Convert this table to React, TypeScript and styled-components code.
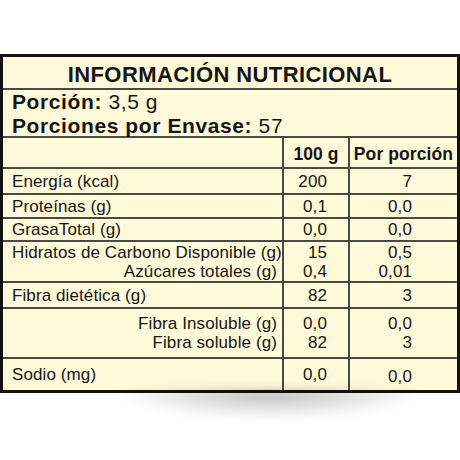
import React from 'react';
import styled, { createGlobalStyle } from 'styled-components';

const GlobalStyle = createGlobalStyle`
  html, body {
    margin: 0;
    padding: 0;
    background: #ffffff;
  }
  body {
    font-family: "Liberation Sans", Arial, sans-serif;
    color: #161616;
  }
`;

const LINE = '#4a4a44';

const Page = styled.div`
  width: 460px;
  height: 460px;
  padding-top: 54px;
  box-sizing: border-box;
  position: relative;
  overflow: hidden;
`;

const Panel = styled.div`
  position: relative;
  z-index: 0;
  width: 460px;
  box-sizing: border-box;
  border: 3px solid #111;
  background: #fdf9d9;

  &::after {
    content: '';
    position: absolute;
    left: 110px;
    right: 30px;
    bottom: -30px;
    height: 30px;
    background: radial-gradient(ellipse at 50% 0%, rgba(0, 0, 0, 0.28), rgba(0, 0, 0, 0) 70%);
    filter: blur(4px);
    z-index: -1;
  }
`;

const Title = styled.div`
  height: 31px;
  padding-top: 5px;
  box-sizing: border-box;
  text-align: center;
  font-size: 22px;
  line-height: 26px;
  letter-spacing: 0.4px;
  font-weight: bold;
`;

const Serving = styled.div`
  height: 48px;
  box-sizing: border-box;
  border-top: 2px solid ${LINE};
  padding: 0 0 0 9px;
  font-size: 21px;
  line-height: 23.5px;
  letter-spacing: 0.6px;

  b {
    font-weight: bold;
  }
`;

const Row = styled.div<{ $h: number }>`
  display: grid;
  grid-template-columns: 279px 66px 109px;
  height: ${(p) => p.$h}px;
  box-sizing: border-box;
  border-top: 2px solid ${LINE};
`;

const Cell = styled.div<{ $col: 1 | 2 | 3; $head?: boolean; $dy?: number }>`
  display: flex;
  flex-direction: column;
  justify-content: center;
  align-items: ${(p) => (p.$head ? 'center' : p.$col === 1 ? 'stretch' : 'flex-end')};
  border-left: ${(p) => (p.$col === 1 ? 'none' : `2px solid ${LINE}`)};
  padding-left: ${(p) => (p.$col === 1 ? '9px' : '0')};
  padding-right: ${(p) => (p.$head ? '0' : p.$col === 1 ? '5px' : p.$col === 2 ? '21px' : '45px')};
  padding-top: ${(p) => (p.$dy ?? 0)}px;
  font-size: ${(p) => (p.$head ? '17.5px' : '17px')};
  font-weight: ${(p) => (p.$head ? 'bold' : 'normal')};
  line-height: 19px;
  letter-spacing: 0.1px;
  white-space: nowrap;
`;

const Line = styled.span<{ $right?: boolean }>`
  display: block;
  text-align: ${(p) => (p.$right ? 'right' : 'left')};
`;

type Item = { text: string; sub?: boolean };
type Entry = { h: number; items: Item[]; a: string[]; b: string[]; dy?: number; dyB?: number };

const rows: Entry[] = [
  { h: 26, items: [{ text: 'Energía (kcal)' }], a: ['200'], b: ['7'] },
  { h: 24, items: [{ text: 'Proteínas (g)' }], a: ['0,1'], b: ['0,0'] },
  { h: 23, items: [{ text: 'GrasaTotal (g)' }], a: ['0,0'], b: ['0,0'] },
  {
    h: 41,
    items: [{ text: 'Hidratos de Carbono Disponible (g)' }, { text: 'Azúcares totales (g)', sub: true }],
    a: ['15', '0,4'],
    b: ['0,5', '0,01'],
  },
  { h: 26, items: [{ text: 'Fibra dietética (g)' }], a: ['82'], b: ['3'] },
  {
    h: 50,
    items: [{ text: 'Fibra Insoluble (g)', sub: true }, { text: 'Fibra soluble (g)', sub: true }],
    a: ['0,0', '82'],
    b: ['0,0', '3'],
  },
  { h: 33, items: [{ text: 'Sodio (mg)' }], a: ['0,0'], b: ['0,0'], dy: -2, dyB: 4 },
];

export default function App() {
  return (
    <Page>
      <GlobalStyle />
      <Panel>
        <Title>INFORMACIÓN NUTRICIONAL</Title>
        <Serving>
          <div>
            <b>Porción:</b> 3,5 g
          </div>
          <div>
            <b>Porciones por Envase:</b> 57
          </div>
        </Serving>
        <Row $h={31}>
          <Cell $col={1} />
          <Cell $col={2} $head $dy={4}>
            100 g
          </Cell>
          <Cell $col={3} $head $dy={4}>
            Por porción
          </Cell>
        </Row>
        {rows.map((r, i) => (
          <Row key={i} $h={r.h}>
            <Cell $col={1} $dy={r.dy}>
              {r.items.map((it, j) => (
                <Line key={j} $right={it.sub}>
                  {it.text}
                </Line>
              ))}
            </Cell>
            <Cell $col={2} $dy={r.dy}>
              {r.a.map((v, j) => (
                <Line key={j}>{v}</Line>
              ))}
            </Cell>
            <Cell $col={3} $dy={r.dyB ?? r.dy}>
              {r.b.map((v, j) => (
                <Line key={j}>{v}</Line>
              ))}
            </Cell>
          </Row>
        ))}
      </Panel>
    </Page>
  );
}
